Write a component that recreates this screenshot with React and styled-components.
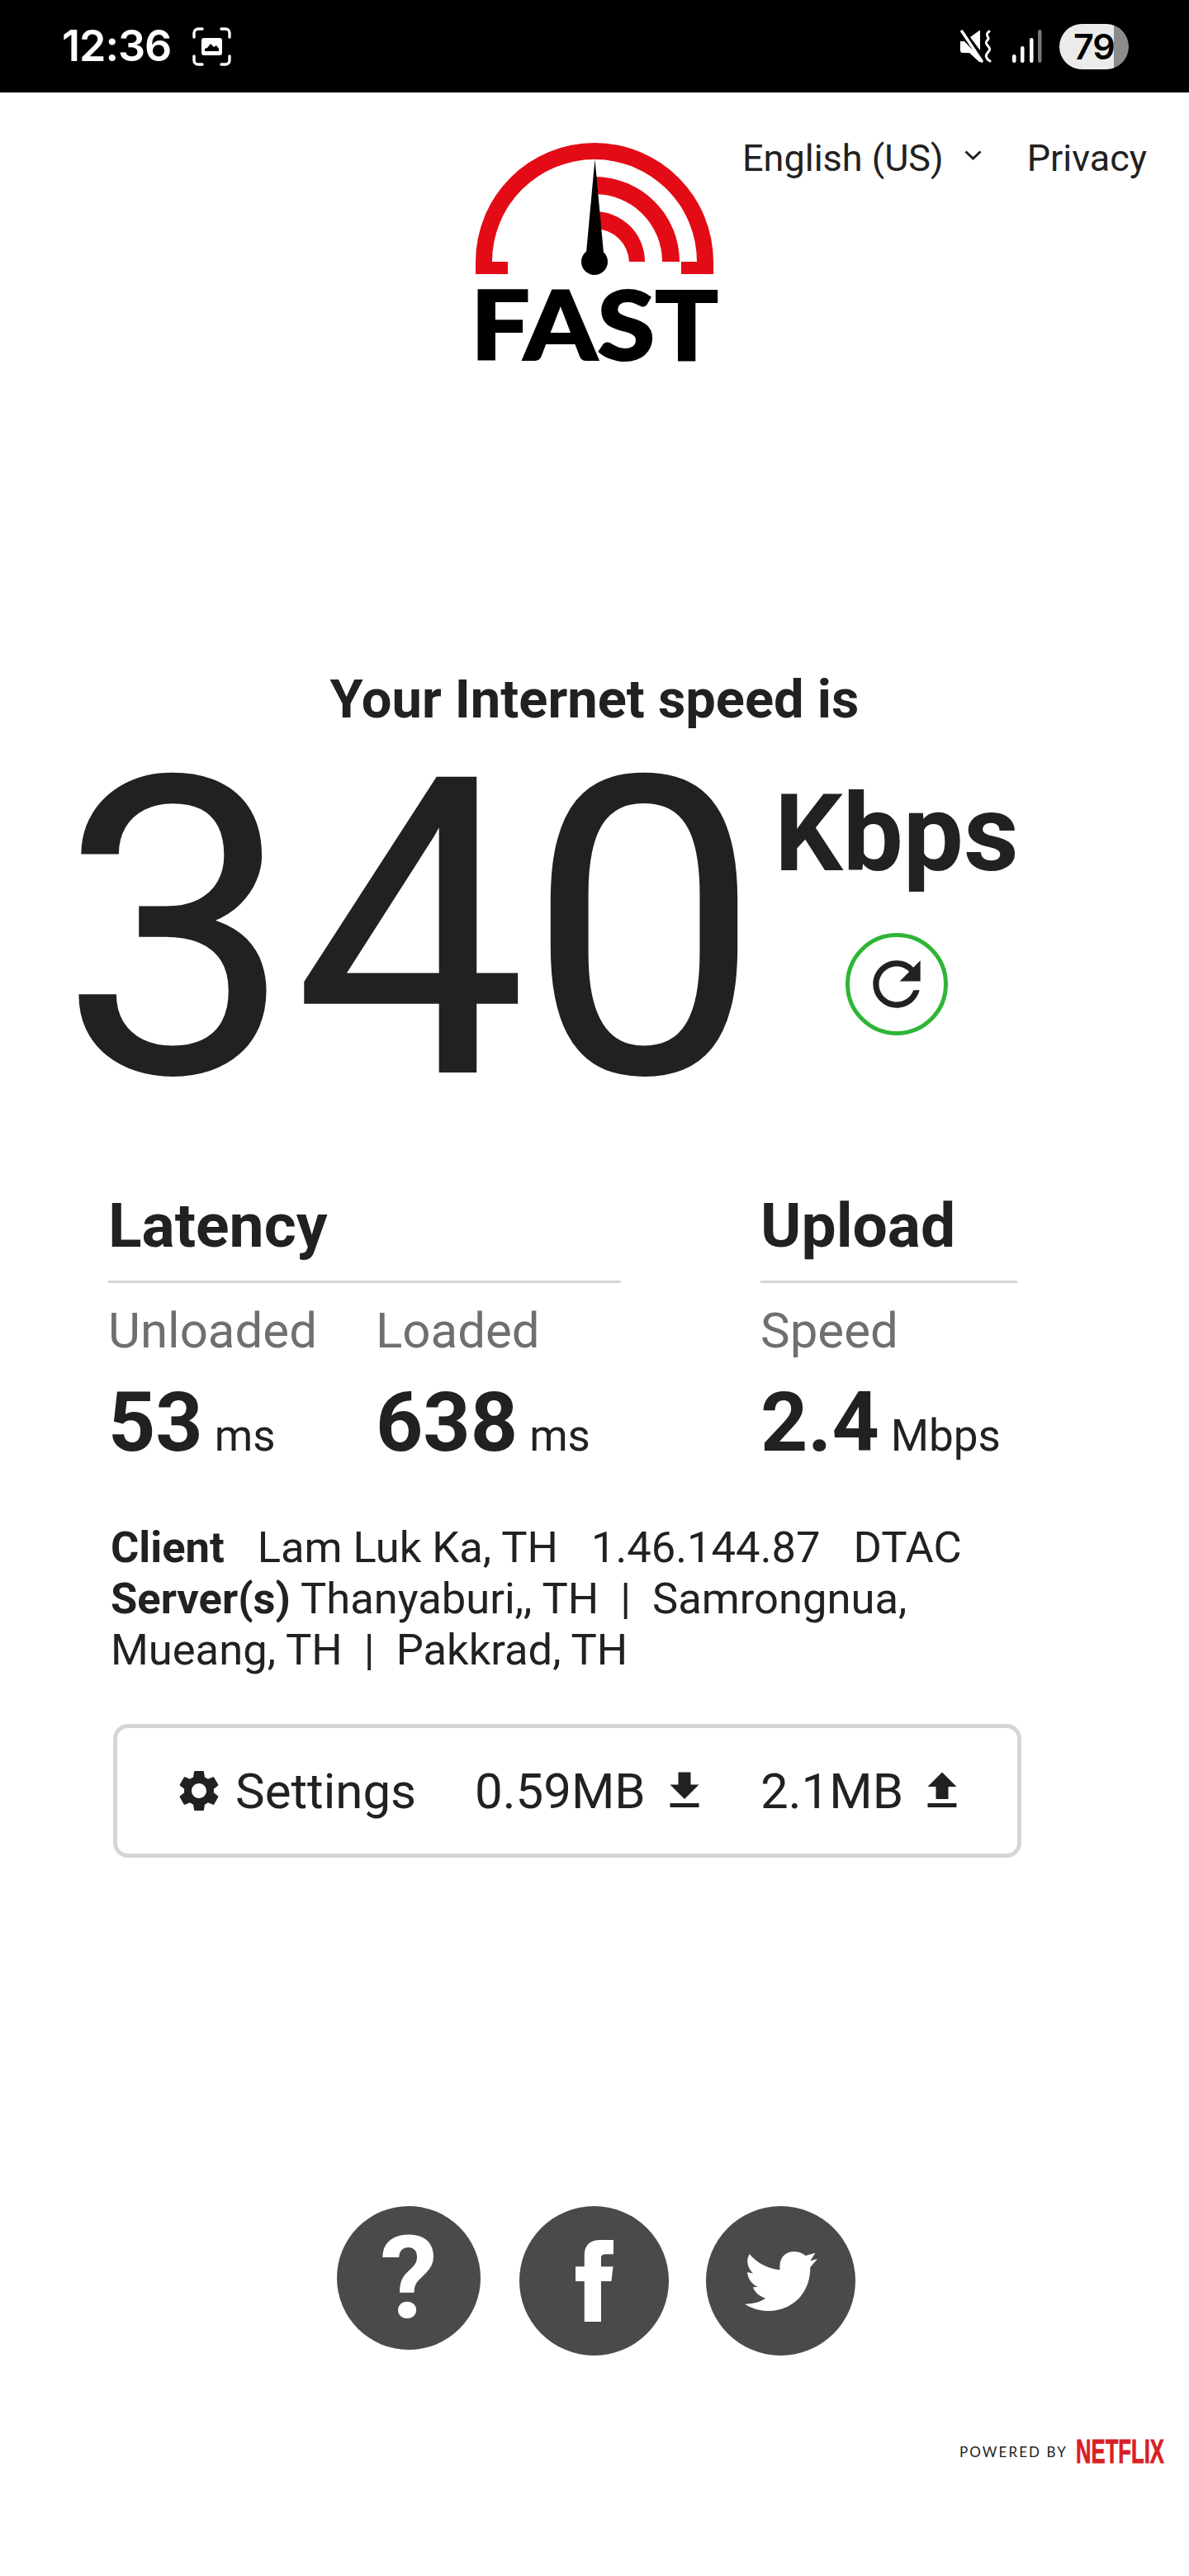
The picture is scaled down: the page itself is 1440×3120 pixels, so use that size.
import React from 'react';
import styled, { createGlobalStyle } from 'styled-components';
import { MdFileDownload, MdFileUpload, MdRefresh, MdSettings } from 'react-icons/md';

const GlobalStyle = createGlobalStyle`
  html, body {
    margin: 0;
    padding: 0;
    background: #fff;
  }
  body {
    font-family: 'Roboto', 'Liberation Sans', sans-serif;
    color: #222120;
  }
`;

const Page = styled.div`
  width: 1440px;
  height: 3120px;
  overflow: hidden;
  background: #fff;
  display: flex;
  flex-direction: column;
`;

const StatusBar = styled.div`
  height: 112px;
  background: #000;
  display: flex;
  align-items: center;
  justify-content: space-between;
  padding: 0 73px 0 75px;
  box-sizing: border-box;
`;

const StatusGroup = styled.div`
  display: flex;
  align-items: center;
`;

const Clock = styled.span`
  font-family: 'Inter', sans-serif;
  font-weight: 600;
  font-size: 52px;
  line-height: 56px;
  letter-spacing: -1px;
  color: #fff;
  margin-right: 26px;
`;

const SignalGap = styled.div`
  width: 23px;
`;

const Battery = styled.div`
  position: relative;
  width: 84px;
  height: 55px;
  border-radius: 28px;
  margin-left: 20px;
  background: linear-gradient(to right, #ebebeb 66px, #8c8c8c 66px);
  overflow: hidden;
`;

const BatteryLevel = styled.span`
  position: absolute;
  left: 17px;
  top: 0;
  font-family: 'Inter', sans-serif;
  font-weight: 600;
  font-size: 43px;
  line-height: 55px;
  letter-spacing: -1px;
  color: #000;
`;

const Header = styled.header`
  display: grid;
  grid-template-columns: 576px 288px 1fr;
  padding-top: 61px;
`;

const LogoWrap = styled.div`
  grid-column: 2;
  line-height: 0;
`;

const Nav = styled.nav`
  grid-column: 3;
  display: flex;
  align-items: center;
  height: 44px;
  margin-top: -3px;
  padding-left: 35px;
  font-size: 45px;
  line-height: 44px;
  white-space: nowrap;
`;

const Chevron = styled.svg`
  margin: 0 55px 0 25px;
  position: relative;
  top: -4px;
`;

const Headline = styled.h1`
  margin: 375px 0 0;
  font-size: 65px;
  line-height: 70px;
  font-weight: 700;
  text-align: center;
`;

const SpeedRow = styled.div`
  display: flex;
  align-items: flex-start;
  padding-left: 72px;
  height: 500px;
`;

const SpeedValue = styled.div`
  font-size: 504px;
  line-height: 504px;
  font-weight: 400;
  margin-top: -7px;
  width: 866px;
  white-space: nowrap;
`;

const SpeedSide = styled.div`
  display: flex;
  flex-direction: column;
  align-items: center;
  padding-top: 63px;
`;

const Unit = styled.div`
  font-size: 130px;
  line-height: 130px;
  font-weight: 700;
`;

const Refresh = styled.div`
  width: 124px;
  height: 124px;
  margin-top: 55px;
  box-sizing: border-box;
  border: 5px solid #2fb536;
  border-radius: 50%;
  display: flex;
  align-items: center;
  justify-content: center;
`;

const Metrics = styled.section`
  display: grid;
  grid-template-columns: 621px 311px;
  column-gap: 169px;
  padding-left: 131px;
  margin-top: 67px;
`;

const MetricHeading = styled.h2`
  margin: 0;
  padding-bottom: 32px;
  border-bottom: 3px solid #d5d5d1;
  font-size: 75px;
  line-height: 70px;
  font-weight: 700;
`;

const MetricCols = styled.div`
  display: flex;
  margin-top: 26px;
`;

const MetricCol = styled.div`
  width: ${props => props.$width}px;
`;

const MetricLabel = styled.div`
  font-size: 60px;
  line-height: 64px;
  color: #6f6f6f;
`;

const MetricValue = styled.div`
  margin-top: 31px;
  display: flex;
  align-items: baseline;
  line-height: 96px;
  white-space: nowrap;
`;

const Number = styled.span`
  font-size: 100px;
  font-weight: 700;
  margin-right: 14px;
`;

const MetricUnit = styled.span`
  font-size: 53px;
`;

const Info = styled.div`
  margin: 56px 0 0 134px;
  width: 1060px;
  font-size: 52.5px;
  line-height: 62px;
`;

const InfoItem = styled.span`
  margin-right: 40px;
`;

const SettingsBar = styled.div`
  width: 1100px;
  height: 162px;
  margin: 59px 0 0 137px;
  box-sizing: border-box;
  border: 5px solid #d5d5d1;
  border-radius: 18px;
  display: flex;
  align-items: center;
  padding-left: 69px;
  font-size: 60px;
  white-space: nowrap;
`;

const SettingsPart = styled.div`
  display: flex;
  align-items: center;
  width: ${props => props.$width}px;
`;

const SettingsLabel = styled.span`
  margin-left: 14px;
`;

const TransferIcon = styled.span`
  display: flex;
  margin-left: 17px;
`;

const Social = styled.div`
  display: flex;
  align-items: flex-start;
  margin: 422px 0 0 408px;
`;

const SocialButton = styled.div`
  width: ${props => props.$size}px;
  height: ${props => props.$size}px;
  margin-right: ${props => props.$gap}px;
  border-radius: 50%;
  background: #4a4a4a;
  color: #fff;
  display: flex;
  align-items: center;
  justify-content: center;
  font-size: 140px;
  font-weight: 700;
  line-height: 1;
`;

const Footer = styled.footer`
  display: flex;
  justify-content: flex-end;
  align-items: center;
  margin-top: 100px;
  padding-right: 30px;
`;

const Powered = styled.span`
  font-family: 'Lato', sans-serif;
  font-weight: 400;
  font-size: 17px;
  letter-spacing: 2.1px;
  color: #222;
  margin-right: 10px;
`;

const FastLogo = () => (
  <svg width="288" height="264" viewBox="576 173 288 264" overflow="visible">
    <path
      fill="#e30c16"
      d="M576 332V317A144 144 0 0 1 864 317V332H825V317H844A124 124 0 0 0 596 317H615V332Z"
    />
    <path fill="#e30c16" d="M720 214A103 103 0 0 1 823 317H802A82 82 0 0 0 720 235Z" />
    <path fill="#e30c16" d="M720 256A61 61 0 0 1 781 317H762A42 42 0 0 0 720 277Z" />
    <path fill="#000" d="M720.5 193L731 306H710Z" />
    <circle cx="720" cy="317" r="16" fill="#000" />
    <text
      x="570"
      y="436"
      textLength="300"
      lengthAdjust="spacingAndGlyphs"
      fontFamily="Lato, sans-serif"
      fontWeight="900"
      fontSize="116"
      fill="#000"
      stroke="#000"
      strokeWidth="2"
    >
      FAST
    </text>
  </svg>
);

const ScreenshotIcon = () => (
  <svg width="47" height="47" viewBox="0 0 47 47" fill="none">
    <path
      stroke="#fff"
      strokeWidth="3.4"
      strokeLinecap="round"
      d="M2 12V7a5 5 0 0 1 5-5h5M35 2h5a5 5 0 0 1 5 5v5M45 35v5a5 5 0 0 1-5 5h-5M12 45H7a5 5 0 0 1-5-5v-5"
    />
    <path
      fill="#fff"
      fillRule="evenodd"
      d="M14 13h19a3 3 0 0 1 3 3v15a3 3 0 0 1-3 3H14a3 3 0 0 1-3-3V16a3 3 0 0 1 3-3ZM15 29h17v-3l-3-4-3 2-4-4-4 5-3 1Z"
    />
  </svg>
);

const MuteIcon = () => (
  <svg width="40" height="40" viewBox="0 0 40 40" fill="none">
    <path fill="#fff" d="M1 14h5L25 34v5l-1 0-12-11H4a3 3 0 0 1-3-3ZM13 9l11-8h1v24Z" />
    <path stroke="#fff" strokeWidth="3.4" strokeLinecap="round" d="M3 2L27 38" />
    <path
      stroke="#fff"
      strokeWidth="3"
      strokeLinecap="round"
      d="M36 2c-6 4 0 7-1 9s-5 4-1 8 3 6 0 9-2 7 3 10"
    />
  </svg>
);

const SignalIcon = () => (
  <svg width="38" height="40" viewBox="0 0 38 40">
    <rect x="1" y="30" width="4.5" height="10" rx="2.2" fill="#fff" />
    <rect x="11" y="20" width="4.5" height="20" rx="2.2" fill="#fff" />
    <rect x="22" y="10" width="4.5" height="30" rx="2.2" fill="#fff" />
    <rect x="32" y="0" width="4.5" height="40" rx="2.2" fill="#777" />
  </svg>
);

const TwitterBird = () => (
  <svg width="88" height="72" viewBox="1175 228 203 217" preserveAspectRatio="none">
    <path
      fill="#fff"
      d="M1372 233L1345 243C1335 232 1322 228 1310 228C1288 230 1270 250 1273 295C1240 292 1210 270 1188 237C1178 262 1182 285 1198 308L1182 303C1184 328 1195 348 1212 357L1198 358C1203 378 1218 392 1233 398C1220 412 1198 418 1175 420C1195 436 1218 445 1240 445C1300 445 1358 390 1358 285L1378 255L1358 262Z"
    />
  </svg>
);

const FacebookF = () => (
  <svg width="46" height="99" viewBox="705 190 107 297" preserveAspectRatio="none">
    <path
      fill="#fff"
      d="M812 190H775C745 190 730 210 730 245V287H705V340H730V487H777V340H806L811 287H777V255C777 247 781 242 790 242H812Z"
    />
  </svg>
);

export default function App() {
  return (
    <Page>
      <GlobalStyle />
      <StatusBar>
        <StatusGroup>
          <Clock>12:36</Clock>
          <ScreenshotIcon />
        </StatusGroup>
        <StatusGroup>
          <MuteIcon />
          <SignalGap />
          <SignalIcon />
          <Battery>
            <BatteryLevel>79</BatteryLevel>
          </Battery>
        </StatusGroup>
      </StatusBar>

      <Header>
        <LogoWrap>
          <FastLogo />
        </LogoWrap>
        <Nav>
          English (US)
          <Chevron width="21" height="12" viewBox="0 0 21 12" fill="none">
            <path d="M1.5 1.5l9 8.5 9-8.5" stroke="#222120" strokeWidth="3" />
          </Chevron>
          Privacy
        </Nav>
      </Header>

      <Headline>Your Internet speed is</Headline>
      <SpeedRow>
        <SpeedValue>340</SpeedValue>
        <SpeedSide>
          <Unit>Kbps</Unit>
          <Refresh>
            <MdRefresh size={86} color="#222120" />
          </Refresh>
        </SpeedSide>
      </SpeedRow>

      <Metrics>
        <div>
          <MetricHeading>Latency</MetricHeading>
          <MetricCols>
            <MetricCol $width={324}>
              <MetricLabel>Unloaded</MetricLabel>
              <MetricValue>
                <Number>53</Number>
                <MetricUnit>ms</MetricUnit>
              </MetricValue>
            </MetricCol>
            <MetricCol $width={297}>
              <MetricLabel>Loaded</MetricLabel>
              <MetricValue>
                <Number>638</Number>
                <MetricUnit>ms</MetricUnit>
              </MetricValue>
            </MetricCol>
          </MetricCols>
        </div>
        <div>
          <MetricHeading>Upload</MetricHeading>
          <MetricCols>
            <MetricCol $width={311}>
              <MetricLabel>Speed</MetricLabel>
              <MetricValue>
                <Number>2.4</Number>
                <MetricUnit>Mbps</MetricUnit>
              </MetricValue>
            </MetricCol>
          </MetricCols>
        </div>
      </Metrics>

      <Info>
        <div>
          <InfoItem>
            <b>Client</b>
          </InfoItem>
          <InfoItem>Lam Luk Ka, TH</InfoItem>
          <InfoItem>1.46.144.87</InfoItem>
          DTAC
        </div>
        <div>
          <b>Server(s)</b> Thanyaburi,, TH &nbsp;|&nbsp; Samrongnua, Mueang, TH &nbsp;|&nbsp; Pakkrad, TH
        </div>
      </Info>

      <SettingsBar>
        <SettingsPart $width={364}>
          <MdSettings size={60} />
          <SettingsLabel>Settings</SettingsLabel>
        </SettingsPart>
        <SettingsPart $width={346}>
          0.59MB
          <TransferIcon>
            <MdFileDownload size={60} />
          </TransferIcon>
        </SettingsPart>
        <SettingsPart $width={240}>
          2.1MB
          <TransferIcon>
            <MdFileUpload size={60} />
          </TransferIcon>
        </SettingsPart>
      </SettingsBar>

      <Social>
        <SocialButton $size={174} $gap={47}>?</SocialButton>
        <SocialButton $size={181} $gap={45}>
          <FacebookF />
        </SocialButton>
        <SocialButton $size={181} $gap={0}>
          <TwitterBird />
        </SocialButton>
      </Social>

      <Footer>
        <Powered>POWERED BY</Powered>
        <svg width="107" height="32" viewBox="0 0 107 32" overflow="visible">
          <text
            x="0"
            y="30"
            textLength="107"
            lengthAdjust="spacingAndGlyphs"
            fontFamily="'Liberation Sans', sans-serif"
            fontWeight="700"
            fontSize="40"
            fill="#d81f26"
            stroke="#d81f26"
            strokeWidth="0.8"
          >
            NETFLIX
          </text>
        </svg>
      </Footer>
    </Page>
  );
}
